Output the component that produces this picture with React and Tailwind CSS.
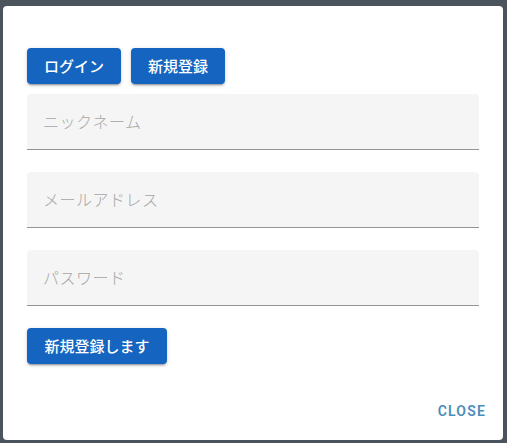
import React from 'react'

const jp = { fontFamily: '"Noto Sans CJK JP", "Noto Sans", Roboto, sans-serif' }

function Field({ label }) {
  return (
    <div className="h-[56px] bg-[#f5f5f5] rounded-t-[4px] border-b border-[#949494] flex items-center px-4">
      <span className="text-[16px] text-[#a6a6a6] font-light tracking-[0.5px] -mt-[2px]">{label}</span>
    </div>
  )
}

function Btn({ children, className = '' }) {
  return (
    <button
      className={
        'h-9 rounded-[4px] bg-[#1565c0] text-white text-[15px] font-medium shadow-[0_3px_1px_-2px_rgba(0,0,0,0.2),0_2px_2px_0_rgba(0,0,0,0.14),0_1px_5px_0_rgba(0,0,0,0.12)] ' +
        className
      }
    >
      {children}
    </button>
  )
}

export default function App() {
  return (
    <div className="w-[507px] h-[443px] bg-[#4b535c] pt-[6px] pl-[3px] overflow-hidden" style={jp}>
      <div className="w-[500px] h-[434px] bg-white rounded-[4px] flex flex-col">
        <div className="px-6 pt-[42px] flex flex-col">
          <div className="flex gap-[10px]">
            <Btn className="w-[94px]">ログイン</Btn>
            <Btn className="w-[94px]">新規登録</Btn>
          </div>
          <div className="mt-[10px] flex flex-col gap-[22px]">
            <Field label="ニックネーム" />
            <Field label="メールアドレス" />
            <Field label="パスワード" />
          </div>
          <div className="mt-[22px]">
            <Btn className="w-[140px]">新規登録します</Btn>
          </div>
        </div>
        <div className="mt-auto flex justify-end px-[17px] pb-[18px]">
          <span
            className="text-[14px] font-semibold tracking-[1.2px] text-[#4a8db8]"
            style={{ fontFamily: 'Roboto, "Liberation Sans", sans-serif' }}
          >
            CLOSE
          </span>
        </div>
      </div>
    </div>
  )
}
